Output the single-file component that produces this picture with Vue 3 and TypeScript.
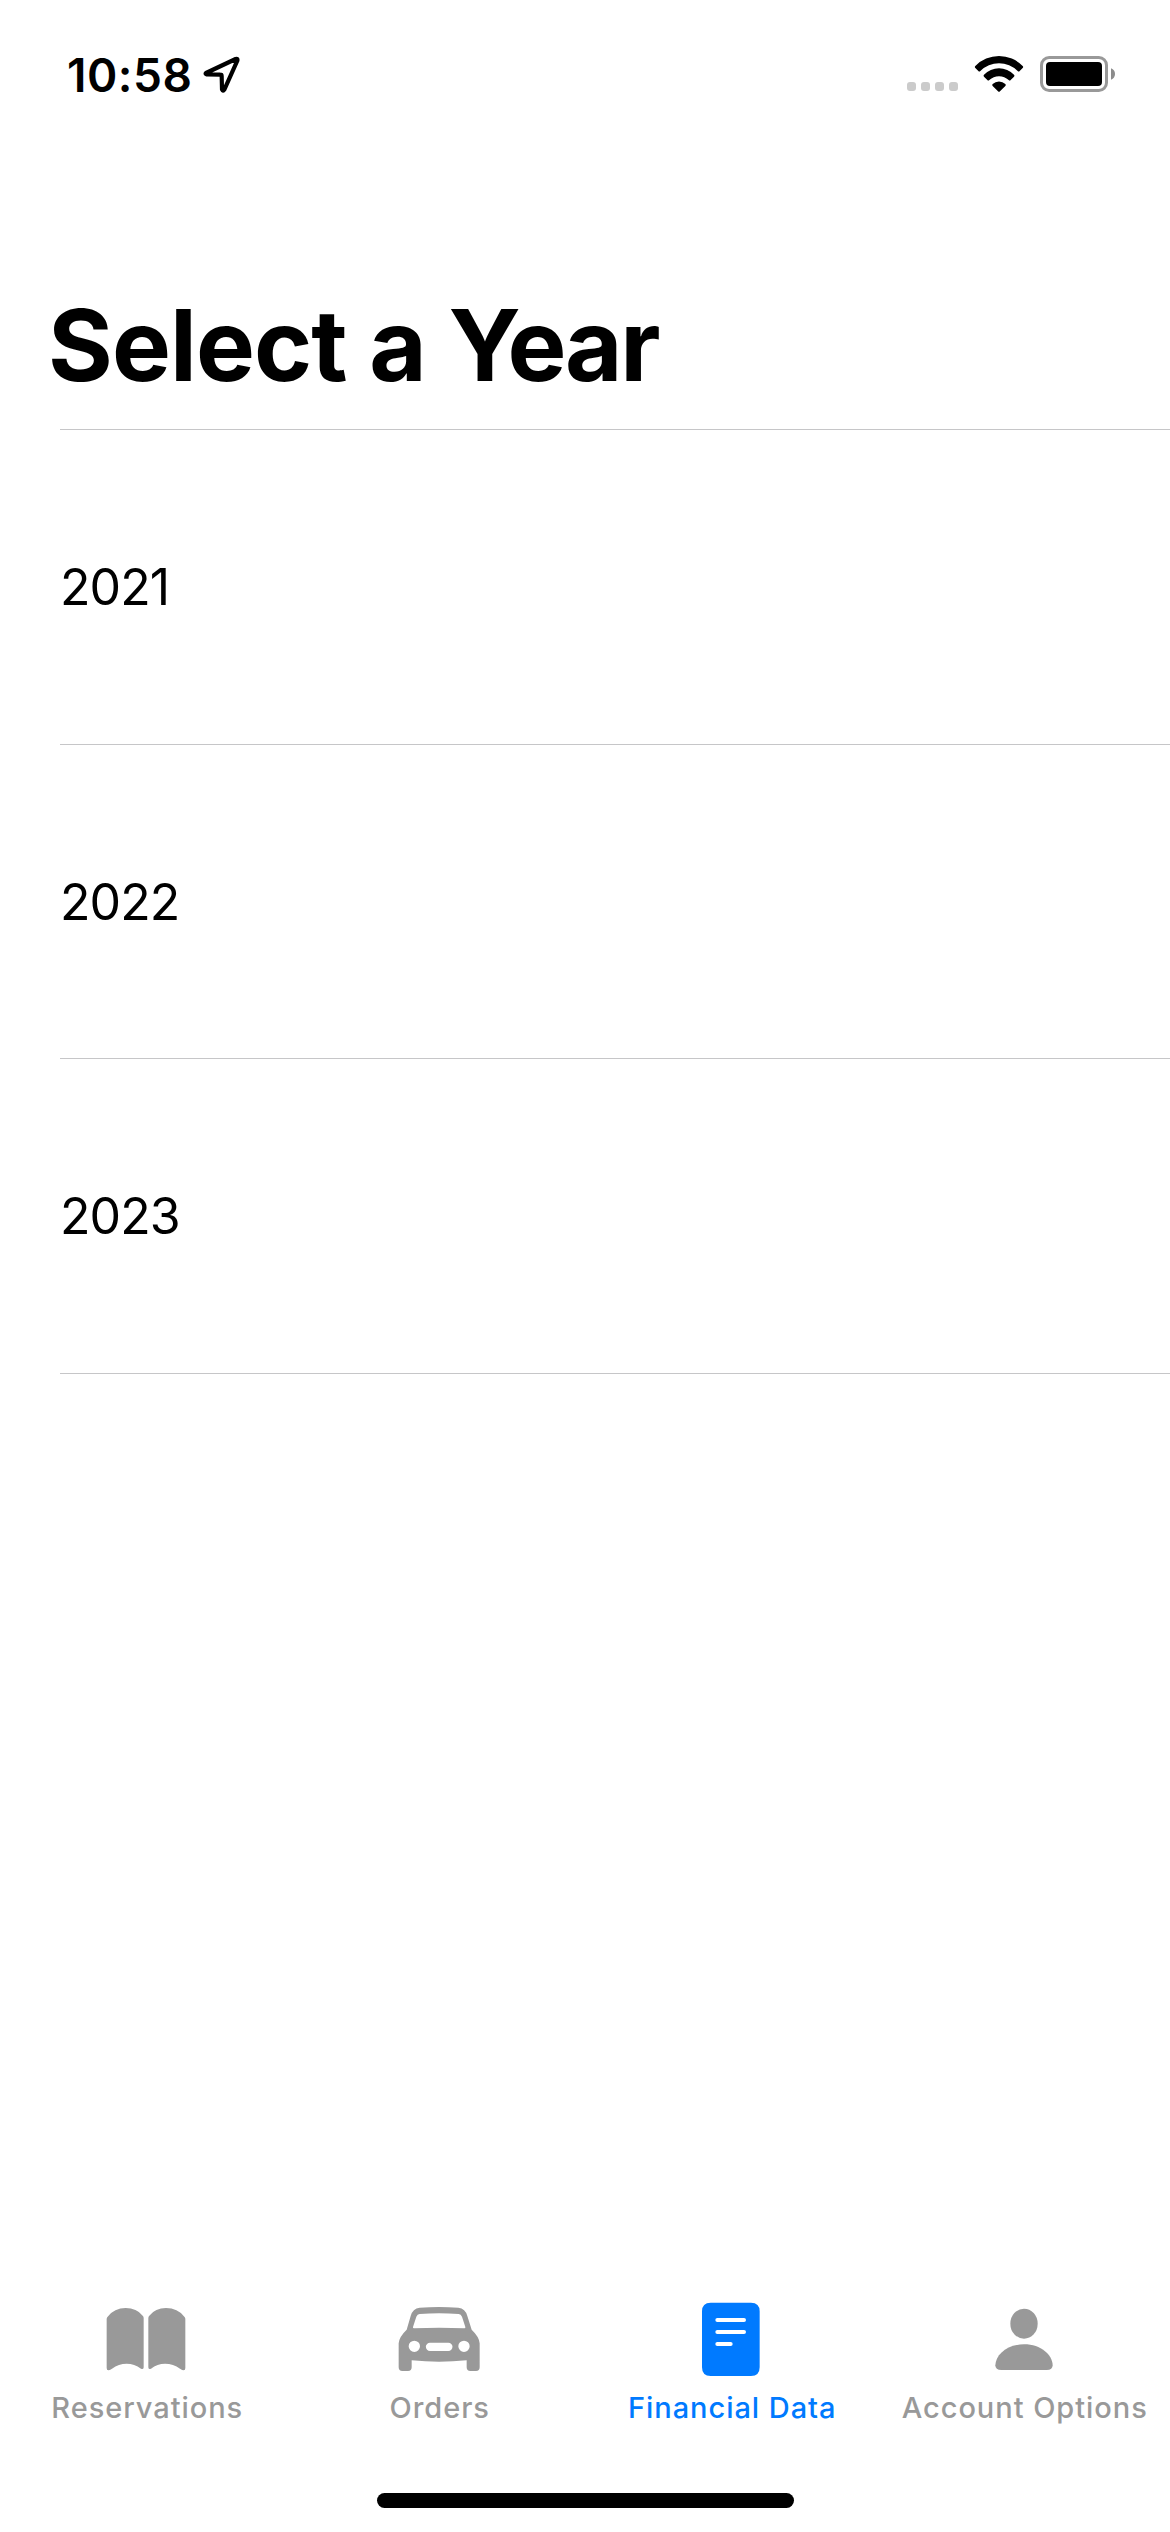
<script setup lang="ts">
import { ref } from 'vue'

type TabId = 'reservations' | 'orders' | 'financial' | 'account'

interface Tab {
  id: TabId
  label: string
}

const years: number[] = [2021, 2022, 2023]

const tabs: Tab[] = [
  { id: 'reservations', label: 'Reservations' },
  { id: 'orders', label: 'Orders' },
  { id: 'financial', label: 'Financial Data' },
  { id: 'account', label: 'Account Options' },
]

const active = ref<TabId>('financial')
</script>

<template>
  <div class="screen">
    <header class="status">
      <span class="time">10:58</span>
      <svg class="location" viewBox="490 48 114 114">
        <path d="M499 99 L588 57 Q595 55 593 62 L554 149 Q550 155 547 148 L546 108 Q546 104 542 104 L501 103 Q496 102 499 99Z" fill="none" stroke="#000" stroke-width="12.5" stroke-linejoin="round" />
      </svg>
      <div class="indicators">
        <svg class="dots" viewBox="51 126 153 27">
          <rect v-for="i in 4" :key="i" :x="51 + (i - 1) * 42" y="126" width="27" height="27" rx="9" fill="#cbcbcb" />
        </svg>
        <svg class="wifi" viewBox="252 42 150 114">
          <path d="M256 75 A99 99 0 0 1 398 75 Q401 78 398 81 L389 90 Q386 93 383 90 A79 79 0 0 0 271 90 Q268 93 265 90 L256 81 Q253 78 256 75Z" />
          <path d="M282 101 A63 63 0 0 1 372 101 Q375 104 372 107 L362 117 Q359 120 356 117 A42 42 0 0 0 298 117 Q295 120 292 117 L282 107 Q279 104 282 101Z" />
          <path d="M308 129 A27 27 0 0 1 346 129 Q349 132 346 135 L330 151 Q327 154 324 151 L308 135 Q305 132 308 129Z" />
        </svg>
        <svg class="battery" viewBox="450 45 228 114">
          <rect x="454.5" y="52.5" width="195" height="99" rx="23" fill="none" stroke="#999" stroke-width="9" />
          <rect x="468" y="66" width="168" height="72" rx="12" />
          <path d="M663 85 Q675 90 675 102 Q675 114 663 119Z" fill="#8c8c8c" />
        </svg>
      </div>
    </header>

    <h1 class="title">Select a <span class="tight">Year</span></h1>

    <ul class="years">
      <li v-for="year in years" :key="year" class="year">{{ year }}</li>
    </ul>

    <nav class="tabs">
      <button
        v-for="tab in tabs"
        :key="tab.id"
        class="tab"
        :class="[tab.id, { active: tab.id === active }]"
        @click="active = tab.id"
      >
        <svg v-if="tab.id === 'reservations'" class="icon" viewBox="229 30 240 225">
          <path d="M231 87 Q231 83 234 80 Q254 54 288 54 Q321 54 339 77 Q342 80 342 84 L342 232 Q342 240 334 236 Q314 221 291 221 Q267 221 247 236 Q231 246 231 234Z" />
          <path d="M467 87 Q467 83 464 80 Q444 54 409 54 Q377 54 359 77 Q356 80 356 84 L356 232 Q356 240 364 236 Q383 221 406 221 Q431 221 451 236 Q467 246 467 234Z" />
        </svg>
        <svg v-else-if="tab.id === 'orders'" class="icon" viewBox="145 30 240 225">
          <path fill-rule="evenodd" d="M168 119 L180 78 Q186 55 207 53 Q265 49 323 53 Q344 55 350 78 L363 119 Q386 141 387 160 L387 232 Q387 243 376 243 L359 243 Q348 243 348 232 L348 211 Q265 219 183 211 L183 232 Q183 243 172 243 L155 243 Q144 243 144 232 L144 160 Q145 141 168 119Z M207 72 Q200 73 197 80 L187 111 Q186 115 190 115 Q265 111 341 115 Q345 115 344 111 L334 80 Q331 73 324 72 Q265 67 207 72Z M174 169 a17 17 0 1 0 34 0 a17 17 0 1 0 -34 0Z M323 169 a17 17 0 1 0 34 0 a17 17 0 1 0 -34 0Z M238 158 L293 158 A12.5 12.5 0 0 1 293 183 L238 183 A12.5 12.5 0 0 1 238 158Z" />
        </svg>
        <svg v-else-if="tab.id === 'financial'" class="icon" viewBox="243 30 240 225">
          <path fill-rule="evenodd" d="M302 38 L423 38 Q449 38 449 64 L449 232 Q449 258 423 258 L302 258 Q276 258 276 232 L276 64 Q276 38 302 38Z M322 84 a6 6 0 0 0 0 12 L402 96 a6 6 0 0 0 0 -12Z M322 120 a6 6 0 0 0 0 12 L402 132 a6 6 0 0 0 0 -12Z M322 156 a6 6 0 0 0 0 12 L362 168 a6 6 0 0 0 0 -12Z" />
        </svg>
        <svg v-else class="icon" viewBox="311 30 240 225">
          <ellipse cx="431" cy="101" rx="41" ry="45" />
          <path d="M345 226 C346 195 379 163 431 163 C483 163 516 195 517 226 Q517 240 499 240 L363 240 Q345 240 345 226Z" />
        </svg>
        <span class="label">{{ tab.label }}</span>
      </button>
    </nav>

    <div class="home-indicator"></div>
  </div>
</template>

<style>
body {
  margin: 0;
  background: #fff;
}
</style>

<style scoped>
.screen {
  display: flex;
  flex-direction: column;
  width: 1170px;
  height: 2532px;
  overflow: hidden;
  background: #fff;
  color: #000;
  font-family: Inter, 'Liberation Sans', sans-serif;
}

.status {
  box-sizing: border-box;
  display: flex;
  align-items: center;
  height: 150px;
  padding: 0 54px 0 67px;
}

.time {
  width: 136px;
  font-size: 46px;
  font-weight: 600;
  line-height: 56px;
  letter-spacing: 0.5px;
  white-space: nowrap;
}

.location {
  width: 38px;
  height: 38px;
}

.indicators {
  display: flex;
  align-items: flex-end;
  gap: 16px;
  height: 38px;
  margin: 0 0 2px auto;
}

.dots {
  width: 51px;
  height: 9px;
  margin-bottom: 2px;
}

.wifi {
  width: 50px;
  height: 38px;
}

.battery {
  width: 76px;
  height: 38px;
}

.title {
  height: 120px;
  margin: 135px 0 24px 48px;
  font-size: 99px;
  font-weight: 700;
  line-height: 120px;
  letter-spacing: -0.9px;
  white-space: nowrap;
}

.tight {
  letter-spacing: -2.4px;
}

.years {
  margin: 0 0 0 60px;
  padding: 0;
  border-top: 1px solid #c6c6c8;
  list-style: none;
}

.year {
  box-sizing: border-box;
  height: 314.67px;
  border-bottom: 1px solid #c6c6c8;
  font-size: 50px;
  line-height: 314px;
  letter-spacing: -0.9px;
}

.tabs {
  display: flex;
  height: 135px;
  margin-top: auto;
}

.tab {
  display: flex;
  flex: 0 0 292.5px;
  flex-direction: column;
  align-items: center;
  padding: 0;
  border: 0;
  background: none;
  color: #999;
  font: inherit;
}

.tab.active {
  color: #007aff;
}

.icon {
  width: 80px;
  height: 75px;
  overflow: visible;
  fill: currentColor;
}

.label {
  margin-top: 15px;
  padding-left: 2px;
  font-size: 29px;
  font-weight: 500;
  line-height: 36px;
  letter-spacing: 0.95px;
  white-space: nowrap;
}

.home-indicator {
  flex: none;
  width: 417px;
  height: 15px;
  margin: 58px 0 24px 377px;
  border-radius: 8px;
  background: #000;
}
</style>
